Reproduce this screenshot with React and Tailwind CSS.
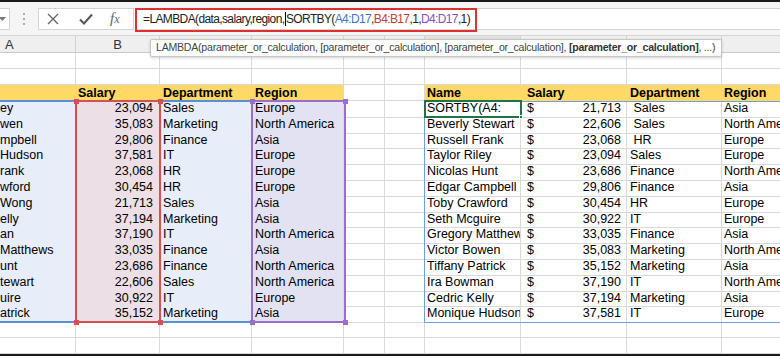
import React from 'react'

const cols = 'grid grid-cols-[76px_84px_92px_92px_41px_40px_96px_106px_95px_120px]'

const leftRows = [
  ['ey', '23,094', 'Sales', 'Europe'],
  ['wen', '35,083', 'Marketing', 'North America'],
  ['mpbell', '29,806', 'Finance', 'Asia'],
  ['Hudson', '37,581', 'IT', 'Europe'],
  ['rank', '23,068', 'HR', 'Europe'],
  ['wford', '30,454', 'HR', 'Europe'],
  ['Wong', '21,713', 'Sales', 'Asia'],
  ['elly', '37,194', 'Marketing', 'Asia'],
  ['an', '37,190', 'IT', 'North America'],
  ['Matthews', '33,035', 'Finance', 'Asia'],
  ['unt', '23,686', 'Finance', 'North America'],
  ['tewart', '22,606', 'Sales', 'North America'],
  ['uire', '30,922', 'IT', 'Europe'],
  ['atrick', '35,152', 'Marketing', 'Asia'],
]

const rightRows = [
  ['SORTBY(A4:', '21,713', ' Sales', 'Asia'],
  ['Beverly Stewart', '22,606', ' Sales', 'North America'],
  ['Russell Frank', '23,068', ' HR', 'Europe'],
  ['Taylor Riley', '23,094', 'Sales', 'Europe'],
  ['Nicolas Hunt', '23,686', 'Finance', 'North America'],
  ['Edgar Campbell', '29,806', 'Finance', 'Asia'],
  ['Toby Crawford', '30,454', 'HR', 'Europe'],
  ['Seth Mcguire', '30,922', 'IT', 'Europe'],
  ['Gregory Matthews', '33,035', 'Finance', 'Asia'],
  ['Victor Bowen', '35,083', 'Marketing', 'North America'],
  ['Tiffany Patrick', '35,152', 'Marketing', 'Asia'],
  ['Ira Bowman', '37,190', 'IT', 'North America'],
  ['Cedric Kelly', '37,194', 'Marketing', 'Asia'],
  ['Monique Hudson', '37,581', 'IT', 'Europe'],
]

const grid = 'border-r border-b border-[#dadada]'
const inRange = 'border-r border-b border-[#d5dbe6]'

function EmptyRow() {
  return (
    <div className={`${cols} h-[16px]`}>
      {Array.from({ length: 10 }).map((_, i) => (
        <div key={i} className={grid} />
      ))}
    </div>
  )
}

function Corner({ className }) {
  return <div className={`absolute w-[5px] h-[5px] ${className}`} />
}

export default function App() {
  return (
    <div className="w-[780px] h-[356px] overflow-hidden bg-white font-['Liberation_Sans',Arial,sans-serif] text-[12.5px] text-black">
      <div className="h-[2px] bg-[#1a1a1a]" />

      {/* Formula bar */}
      <div className="h-[34px] bg-[#f5f5f5] flex items-center border-b border-[#d6d6d6]">
        <div className="w-[10px] h-[22px] bg-white border-r border-y border-[#d4d4d4] flex items-center justify-start">
          <svg width="7" height="4" viewBox="0 0 7 4" className="ml-[-1px]">
            <path d="M0 0 L7 0 L3.5 4 Z" fill="#777" />
          </svg>
        </div>
        <div className="w-[28px] flex flex-col items-center gap-[3px]">
          <div className="w-[2px] h-[2px] bg-[#aaa]" />
          <div className="w-[2px] h-[2px] bg-[#aaa]" />
          <div className="w-[2px] h-[2px] bg-[#aaa]" />
        </div>
        <div className="w-[96px] h-[22px] bg-white border border-[#d4d4d4] flex items-center">
          <svg width="12" height="12" viewBox="0 0 12 12" className="ml-[8px]">
            <path d="M1 1 L11 11 M11 1 L1 11" stroke="#666" strokeWidth="1.3" />
          </svg>
          <svg width="14" height="12" viewBox="0 0 14 12" className="ml-[20px]">
            <path d="M1 6.5 L5 10.5 L13 1.5" stroke="#555" strokeWidth="2" fill="none" />
          </svg>
          <span className="ml-[17px] font-['Liberation_Serif',serif] italic text-[15px] text-[#666] leading-none">
            f<span className="text-[12px]">x</span>
          </span>
        </div>
        <div className="relative ml-[1px] flex-1 h-[22px] bg-white border-y border-[#d4d4d4] flex items-center">
          <div className="absolute left-0 top-[-1px] w-[342px] h-[24px] border-2 border-[#e0302e]" />
          <span className="pl-[8px] text-[12px] tracking-[-0.62px] text-[#222] whitespace-pre">
            =LAMBDA(data,salary,region,
            <span className="inline-block w-[1px] h-[14px] bg-black align-middle ml-[0.5px]" />
            SORTBY(<span className="text-[#3f77c9]">A4:D17</span>,<span className="text-[#c43b3b]">B4:B17</span>,1,
            <span className="text-[#8a4fb8]">D4:D17</span>,1)
          </span>
        </div>
      </div>

      {/* Column headers */}
      <div className="relative">
        <div className={`${cols} h-[17px] bg-[#efefef] border-b border-[#c9c9c9]`}>
          <div className="border-r border-[#d2d2d2] text-[13px] pl-[5px] leading-[17px] text-[#333]">A</div>
          <div className="border-r border-[#d2d2d2] text-[13px] text-center leading-[17px] text-[#333]">B</div>
          <div className="border-r border-[#d2d2d2]" />
          <div className="border-r border-[#d2d2d2]" />
          <div className="border-r border-[#d2d2d2]" />
          <div className="border-r border-[#d2d2d2]" />
          <div className="border-r border-[#d2d2d2] bg-[#e2e2e2]" />
          <div className="border-r border-[#d2d2d2]" />
          <div className="border-r border-[#d2d2d2]" />
          <div />
        </div>
        {/* Function tooltip */}
        <div className="absolute left-[150px] top-[3px] w-[572px] h-[18px] bg-white border border-[#c6c6c6] rounded-[2px] shadow-[0_1px_3px_rgba(0,0,0,0.18)] flex items-center pl-[5px] text-[10.6px] tracking-[-0.25px] text-[#444] whitespace-nowrap z-10">
          LAMBDA(parameter_or_calculation, [parameter_or_calculation], [parameter_or_calculation],&nbsp;
          <span className="font-bold text-[#333]">[parameter_or_calculation]</span>, ...)
        </div>
      </div>

      <EmptyRow />
      <EmptyRow />

      {/* Tables */}
      <div className="relative">
        <div className={`${cols} h-[16px] leading-[16px] font-bold`}>
          <div className="bg-[#ffd966]" />
          <div className="bg-[#ffd966] pl-[2px]">Salary</div>
          <div className="bg-[#ffd966] pl-[3px]">Department</div>
          <div className="bg-[#ffd966] pl-[3px]">Region</div>
          <div className={grid} />
          <div className={grid} />
          <div className="bg-[#ffd966] pl-[2px]">Name</div>
          <div className="bg-[#ffd966] pl-[6px]">Salary</div>
          <div className="bg-[#ffd966] pl-[3px]">Department</div>
          <div className="bg-[#ffd966] pl-[2px]">Region</div>
        </div>

        {leftRows.map((l, i) => {
          const r = rightRows[i]
          return (
            <div key={i} className={`${cols} h-[15.8px] leading-[15.8px] whitespace-pre`}>
              <div className={`${inRange} bg-[#e8eef9] overflow-hidden`}>{l[0]}</div>
              <div className={`${inRange} bg-[#eddfe6] text-right pr-[6px]`}>{l[1]}</div>
              <div className={`${inRange} bg-[#e8eef9] pl-[3px] overflow-hidden`}>{l[2]}</div>
              <div className={`${inRange} bg-[#e3e2f2] pl-[3px] overflow-hidden`}>{l[3]}</div>
              <div className={grid} />
              <div className={grid} />
              <div className={`${grid} pl-[2px] overflow-hidden`}>{r[0]}</div>
              <div className={`${grid} flex justify-between pl-[6px] pr-[5px]`}>
                <span>$</span>
                <span>{r[1]}</span>
              </div>
              <div className={`${grid} pl-[3px] overflow-hidden`}>{r[2]}</div>
              <div className={`${grid} pl-[2px] overflow-hidden`}>{r[3]}</div>
            </div>
          )
        })}

        <EmptyRow />
        <EmptyRow />

        {/* Range highlights */}
        <div className="absolute left-[-4px] top-[15px] w-[350px] h-[223px] border-2 border-[#5b8fd3] pointer-events-none" />
        <div className="absolute left-[75px] top-[15px] w-[86px] h-[223px] border-2 border-[#d65050] pointer-events-none">
          <Corner className="bg-[#d65050] left-[-3.5px] top-[-3.5px]" />
          <Corner className="bg-[#d65050] right-[-3.5px] top-[-3.5px]" />
          <Corner className="bg-[#d65050] left-[-3.5px] bottom-[-3.5px]" />
          <Corner className="bg-[#d65050] right-[-3.5px] bottom-[-3.5px]" />
        </div>
        <div className="absolute left-[251px] top-[15px] w-[95px] h-[223px] border-2 border-[#9a6ccb] pointer-events-none">
          <Corner className="bg-[#9a6ccb] left-[-3.5px] top-[-3.5px]" />
          <Corner className="bg-[#9a6ccb] right-[-3.5px] top-[-3.5px]" />
          <Corner className="bg-[#9a6ccb] left-[-3.5px] bottom-[-3.5px]" />
          <Corner className="bg-[#9a6ccb] right-[-3.5px] bottom-[-3.5px]" />
        </div>
        {/* Spill range */}
        <div className="absolute left-[424px] top-[16px] w-[420px] h-[222px] border border-[#6f9fe0] pointer-events-none" />
        {/* Active cell */}
        <div className="absolute left-[424px] top-[15px] w-[98px] h-[18px] border-2 border-[#217346] pointer-events-none">
          <div className="absolute right-[-3px] bottom-[-3px] w-[4px] h-[4px] bg-[#217346] border border-white" />
        </div>
      </div>

      <div className="h-[2px] bg-[#1a1a1a]" />
    </div>
  )
}
